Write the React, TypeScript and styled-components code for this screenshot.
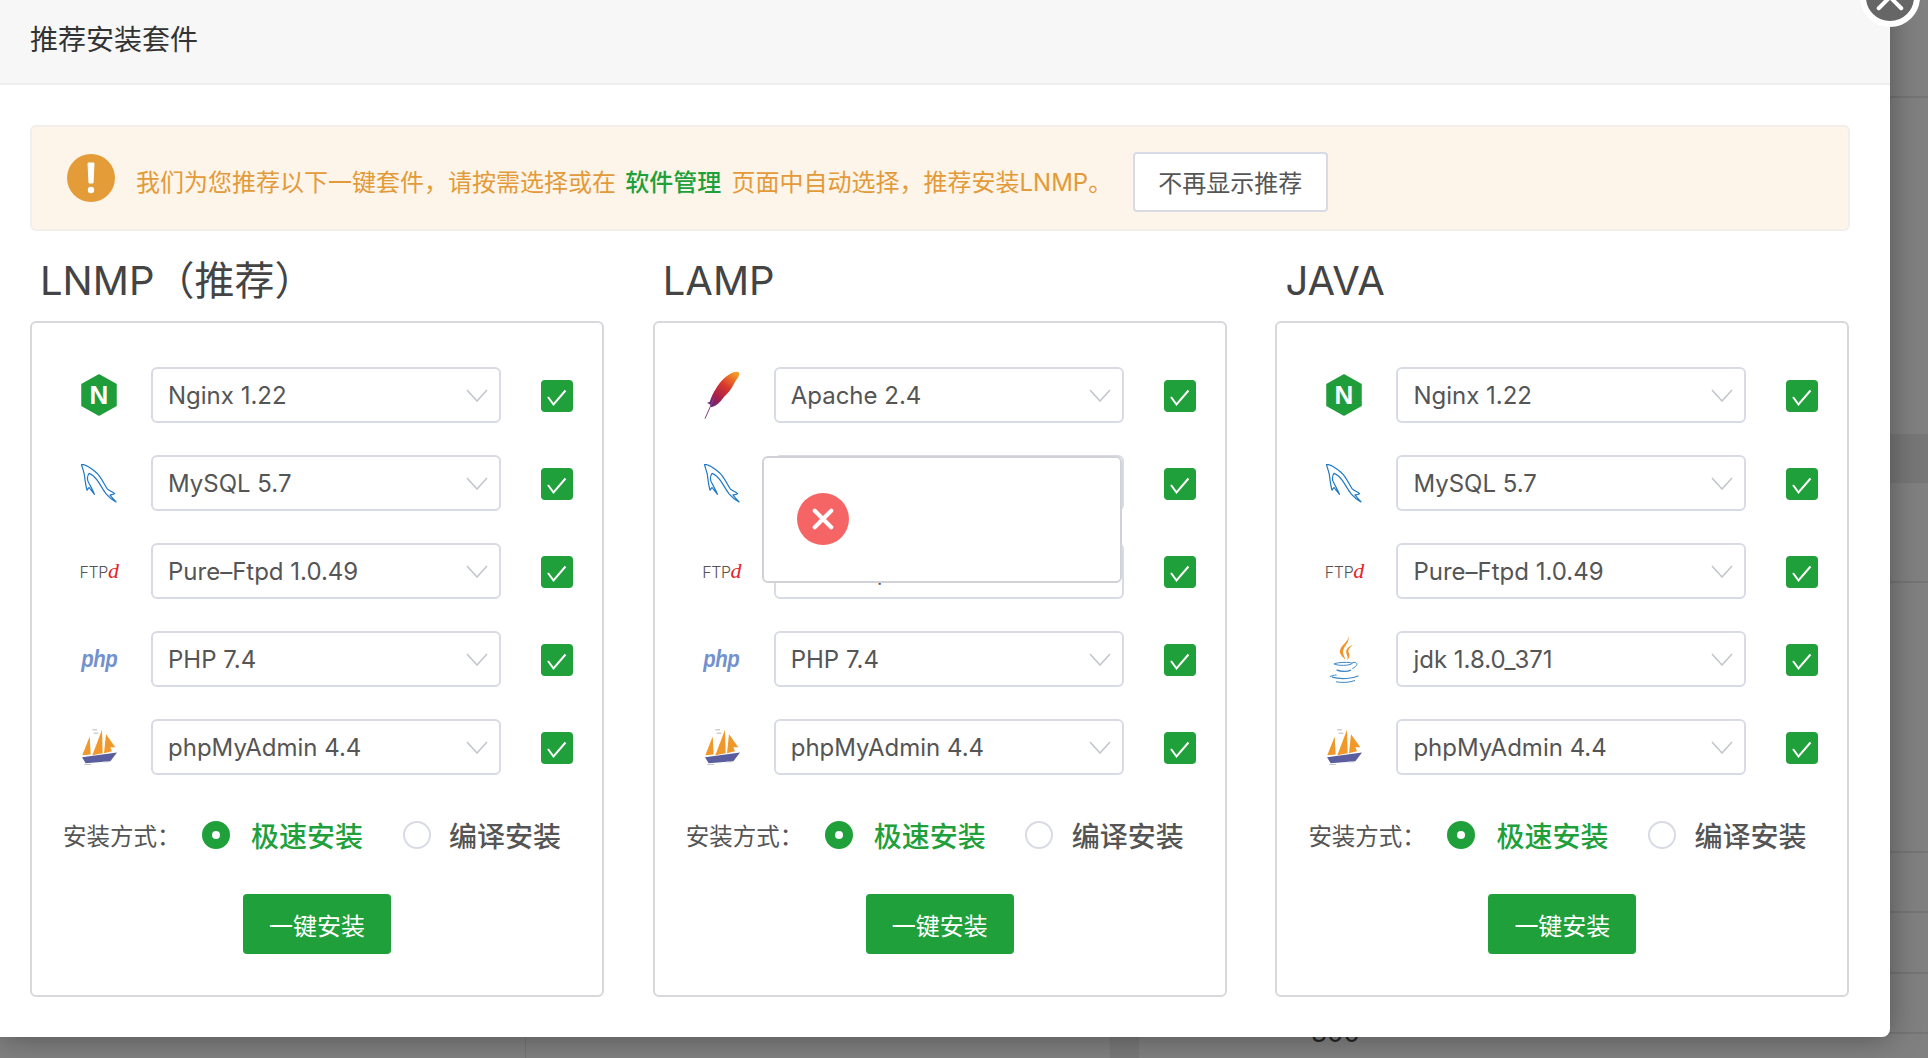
import React from "react";
import styled, { createGlobalStyle } from "styled-components";

const FONT = `Inter, "Noto Sans CJK SC", sans-serif`;
const GREEN = "#20a03a";

const Global = createGlobalStyle`
  html, body { margin: 0; padding: 0; height: 100%; overflow: hidden; }
  body { font-family: ${FONT}; color: #555; }
  * { box-sizing: border-box; }
`;

const Page = styled.div`
  position: relative;
  width: 100%;
  height: 100vh;
  overflow: hidden;
  background: #808080;
`;
const Backdrop = styled.div`
  display: flex;
  flex-direction: column;
`;
const BackRow = styled.div<{ $h: number; $band?: boolean; $plain?: boolean }>`
  height: ${(p) => p.$h}px;
  flex: none;
  background: ${(p) => (p.$band ? "#777" : "transparent")};
  border-bottom: ${(p) => (p.$plain ? "none" : "2px solid #757575")};
`;
const BackFooter = styled.div`
  display: flex;
  height: 24px;
`;
const FootCell = styled.div<{ $w: number; $line?: boolean; $band?: boolean }>`
  width: ${(p) => p.$w}px;
  flex: none;
  background: ${(p) => (p.$band ? "#787878" : "transparent")};
  border-right: ${(p) => (p.$line ? "1px solid #747474" : "none")};
`;
const BackNumber = styled.div`
  margin-top: -16px;
  font-size: 26px;
  line-height: 30px;
  color: #262626;
`;

const Modal = styled.div`
  position: absolute;
  left: 0;
  top: 0;
  width: 1890px;
  height: 1037px;
  background: #fff;
  border-radius: 0 0 8px 0;
  box-shadow: 1px 1px 30px rgba(0, 0, 0, 0.35);
  display: flex;
  flex-direction: column;
`;
const TitleBar = styled.div`
  height: 85px;
  flex: none;
  display: flex;
  align-items: center;
  padding-left: 30px;
  padding-bottom: 7px;
  background: #f7f7f7;
  border-bottom: 2px solid #eee;
  font-size: 28px;
  color: #333;
`;
const CloseBtn = styled.div`
  position: absolute;
  left: 1860px;
  top: -33px;
  width: 60px;
  height: 60px;
  border-radius: 50%;
  background: #666;
  border: 6px solid #fff;
  display: flex;
  align-items: center;
  justify-content: center;
`;
const Body = styled.div`
  padding: 40px 40px 0 30px;
  display: flex;
  flex-direction: column;
`;
const Alert = styled.div`
  height: 106px;
  display: flex;
  align-items: center;
  padding-left: 35px;
  background: #fdf4ea;
  border: 2px solid #f1eeec;
  border-radius: 6px;
`;
const AlertBadge = styled.div`
  width: 48px;
  height: 48px;
  flex: none;
  border-radius: 50%;
  background: #e39c38;
  color: #fff;
  display: flex;
  align-items: center;
  justify-content: center;
  margin-right: 21px;
`;
const AlertText = styled.div`
  font-size: 24px;
  color: #e39a38;
  white-space: pre;
  padding-top: 5px;
`;
const AlertLink = styled.span`
  color: ${GREEN};
  font-weight: 500;
  margin: 0 3.5px 0 2.5px;
`;
const AlertBtn = styled.div`
  width: 195px;
  height: 60px;
  margin: 7px 0 0 20.5px;
  background: #fff;
  border: 2px solid #d8dbe6;
  border-radius: 4px;
  font-size: 24px;
  color: #555;
  display: flex;
  align-items: center;
  justify-content: center;
`;
const Columns = styled.div`
  display: grid;
  grid-template-columns: repeat(3, 574px);
  column-gap: 48.7px;
`;
const Column = styled.div`
  position: relative;
`;
const Heading = styled.div`
  height: 90px;
  padding: 23px 0 0 10px;
  font-size: 40px;
  line-height: 54px;
  color: #444;
  white-space: pre;
`;
const Card = styled.div`
  height: 676px;
  padding: 44px 0 0 49px;
  border: 2px solid #d8d8dc;
  border-radius: 6px;
  display: flex;
  flex-direction: column;
`;
const Rows = styled.div`
  display: flex;
  flex-direction: column;
  gap: 32.1px;
`;
const Row = styled.div`
  display: flex;
  align-items: center;
  height: 56px;
`;
const IconSlot = styled.div`
  width: 36px;
  height: 56px;
  flex: none;
  display: flex;
  align-items: center;
  justify-content: center;
  margin-right: 34px;
`;
const SelectBox = styled.div`
  width: 350px;
  height: 56px;
  flex: none;
  display: flex;
  align-items: center;
  justify-content: space-between;
  padding: 0 11px 0 15px;
  background: #fff;
  border: 2px solid #d8dbe6;
  border-radius: 6px;
  font-size: 24px;
  color: #555;
`;
const Check = styled.div`
  width: 32px;
  height: 32px;
  flex: none;
  margin: 2px 0 0 40px;
  border-radius: 4px;
  background: ${GREEN};
  display: flex;
  align-items: center;
  justify-content: center;
`;
const InstallRow = styled.div`
  display: flex;
  align-items: center;
  height: 30px;
  margin: 45px 0 0 -18px;
`;
const InstallLabel = styled.span`
  width: 139px;
  flex: none;
  font-size: 23.5px;
  color: #555;
  white-space: pre;
`;
const Radio = styled.span<{ $on?: boolean }>`
  width: 28px;
  height: 28px;
  flex: none;
  border-radius: 50%;
  margin-right: ${(p) => (p.$on ? "21px" : "18.5px")};
  background: ${(p) => (p.$on ? GREEN : "#fff")};
  border: 2px solid ${(p) => (p.$on ? GREEN : "#d8dbe6")};
  display: flex;
  align-items: center;
  justify-content: center;
  &::after {
    content: "";
    display: ${(p) => (p.$on ? "block" : "none")};
    width: 8px;
    height: 8px;
    border-radius: 50%;
    background: #fff;
  }
`;
const RadioText = styled.span<{ $on?: boolean }>`
  flex: none;
  font-size: 28px;
  font-weight: 500;
  white-space: nowrap;
  margin-right: 39.5px;
  color: ${(p) => (p.$on ? GREEN : "#555")};
`;
const InstallBtn = styled.div`
  width: 148px;
  height: 60px;
  margin: 44px 0 0 162px;
  border-radius: 4px;
  background: ${GREEN};
  color: #fff;
  font-size: 24px;
  display: flex;
  align-items: center;
  justify-content: center;
`;
const Toast = styled.div`
  position: absolute;
  left: 109.5px;
  top: 225px;
  width: 360px;
  height: 127px;
  background: #fff;
  border: 2px solid #d0d2d8;
  border-radius: 6px;
  display: flex;
  align-items: center;
  padding: 0 0 1px 33px;
`;
const ToastIcon = styled.div`
  width: 52px;
  height: 52px;
  border-radius: 50%;
  background: #f56565;
  display: flex;
  align-items: center;
  justify-content: center;
`;
const FtpMark = styled.span`
  display: inline-flex;
  align-items: baseline;
  font-size: 16px;
  font-weight: 300;
  line-height: 20px;
  letter-spacing: -0.4px;
  color: #555;
  white-space: pre;
`;
const FtpD = styled.span`
  font-family: "Liberation Serif", serif;
  font-style: italic;
  font-size: 22px;
  line-height: 20px;
  color: #e8242c;
`;
const PhpMark = styled.span`
  display: inline-block;
  font-family: "Liberation Sans", sans-serif;
  font-weight: 700;
  font-style: italic;
  font-size: 24px;
  letter-spacing: -0.5px;
  color: #7391cc;
  transform: scaleX(0.85);
`;

const Chevron = () => (
  <svg width="22" height="13" viewBox="0 0 22 13" fill="none">
    <polyline points="1,1 11,12 21,1" stroke="#c0c4cc" strokeWidth="1.5" />
  </svg>
);
const Tick = () => (
  <svg width="32" height="32" viewBox="0 0 32 32" fill="none">
    <polyline points="7,17 12.5,24.5 24.5,10.5" stroke="#fff" strokeWidth="2" />
  </svg>
);
const CrossMark = ({ size, width }: { size: number; width: number }) => (
  <svg width={size} height={size} viewBox="0 0 24 24" fill="none">
    <path d="M3 3L21 21M21 3L3 21" stroke="#fff" strokeWidth={width} strokeLinecap="round" />
  </svg>
);
const Nginx = () => (
  <svg width="36" height="42" viewBox="0 0 36 42">
    <path d="M18 1L35 10.5V31.5L18 41L1 31.5V10.5Z" fill="#1f9d3a" stroke="#1f9d3a" strokeWidth="1.5" strokeLinejoin="round" />
    <text x="18" y="30" textAnchor="middle" fontFamily="Liberation Sans, sans-serif" fontWeight="700" fontSize="26" fill="#fff">N</text>
  </svg>
);
const Dolphin = () => (
  <svg width="36" height="39" viewBox="0 0 107 116" fill="none">
    <path
      d="M1 1C12 1 28 10 46 26C60 38 68 60 78 74C84 80 94 82 100 88C96 92 90 90 86 92C92 100 98 106 104 113C92 106 82 98 74 88C66 78 58 62 48 48C42 40 30 30 24 28C18 36 18 48 24 58C28 66 34 76 40 90C32 80 28 76 24 70C22 72 20 74 18 78C14 66 12 48 10 32C8 22 4 10 1 1Z"
      stroke="#2079c7"
      strokeWidth="3.6"
      strokeLinejoin="round"
    />
  </svg>
);
const Ftpd = () => (
  <FtpMark>
    FTP<FtpD>d</FtpD>
  </FtpMark>
);
const Sailboat = () => (
  <svg width="36" height="37" viewBox="62 58 108 110">
    <path d="M96 60H110M100 70H114" stroke="#b8b8b8" strokeWidth="3" />
    <path d="M66 136L88 80L91 134Z" fill="#f0982a" />
    <path d="M96 136L125 60L127 130Z" fill="#f0982a" />
    <path d="M131 130L137 73L165 112L150 112L155 124Z" fill="#f0982a" />
    <path d="M65 142L170 128L150 154L76 160Z" fill="#5a5e9e" />
    <path d="M72 164H92M128 156H146" stroke="#b8b8c8" strokeWidth="2.5" />
  </svg>
);
const Feather = () => (
  <svg width="36" height="50" viewBox="55 30 108 150" fill="none">
    <defs>
      <linearGradient id="featherFill" x1="0.85" y1="0" x2="0.15" y2="1">
        <stop offset="0" stopColor="#f69d25" />
        <stop offset="0.4" stopColor="#d8382c" />
        <stop offset="0.75" stopColor="#a41e4e" />
        <stop offset="1" stopColor="#5b2a80" />
      </linearGradient>
    </defs>
    <path
      d="M160 38C152 30 130 40 110 60C92 80 78 106 72 126L64 128L74 134L76 142C92 138 104 128 114 112C128 100 138 86 146 70C152 58 164 48 160 38Z"
      fill="url(#featherFill)"
    />
    <path d="M86 112L58 176" stroke="#8a3f8c" strokeWidth="3" />
  </svg>
);
const Java = () => (
  <svg width="33" height="50" viewBox="50 28 100 150" fill="none">
    <path d="M111 32C116 50 86 62 86 80C86 90 96 96 102 106C100 92 94 88 96 78C98 64 118 52 111 32Z" fill="#f0942a" />
    <path d="M126 60C112 66 102 74 106 86C108 94 112 98 108 106C118 98 116 88 112 82C110 74 116 68 126 60Z" fill="#f0942a" />
    <path d="M68 118C82 112 116 112 124 116C116 124 80 124 68 118Z" stroke="#3b86c4" strokeWidth="3" />
    <path d="M124 114C140 110 144 122 124 132" stroke="#3b86c4" strokeWidth="3" />
    <path d="M76 136C88 142 110 142 120 136" stroke="#3b86c4" strokeWidth="3.5" />
    <path d="M56 156C72 150 76 152 76 152M62 158C90 166 126 162 142 154" stroke="#3b86c4" strokeWidth="3.5" />
    <path d="M74 172C92 176 118 174 132 168" stroke="#3b86c4" strokeWidth="3" />
  </svg>
);
const Php = () => <PhpMark>php</PhpMark>;

type Item = { icon: React.ReactNode; label: string };
const ngx: Item = { icon: <Nginx />, label: "Nginx 1.22" };
const mysql: Item = { icon: <Dolphin />, label: "MySQL 5.7" };
const ftp: Item = { icon: <Ftpd />, label: "Pure–Ftpd 1.0.49" };
const php: Item = { icon: <Php />, label: "PHP 7.4" };
const pma: Item = { icon: <Sailboat />, label: "phpMyAdmin 4.4" };

const stacks: { title: string; items: Item[]; toast?: boolean }[] = [
  { title: "LNMP（推荐）", items: [ngx, mysql, ftp, php, pma] },
  { title: "LAMP", toast: true, items: [{ icon: <Feather />, label: "Apache 2.4" }, mysql, ftp, php, pma] },
  { title: "JAVA", items: [ngx, mysql, ftp, { icon: <Java />, label: "jdk 1.8.0_371" }, pma] },
];

const backRows = [
  { h: 98 },
  { h: 336, plain: true },
  { h: 49, band: true, plain: true },
  { h: 100 },
  { h: 270 },
  { h: 60 },
  { h: 61 },
  { h: 60 },
];

export default function App() {
  return (
    <Page>
      <Global />
      <Backdrop>
        {backRows.map((r, i) => (
          <BackRow key={i} $h={r.h} $band={r.band} $plain={r.plain} />
        ))}
        <BackFooter>
          <FootCell $w={526} $line />
          <FootCell $w={584} />
          <FootCell $w={29} $band />
          <FootCell $w={172} />
          <BackNumber>300</BackNumber>
        </BackFooter>
      </Backdrop>
      <Modal>
        <CloseBtn>
          <CrossMark size={30} width={3.2} />
        </CloseBtn>
        <TitleBar>推荐安装套件</TitleBar>
        <Body>
          <Alert>
            <AlertBadge>
              <svg width="8" height="32" viewBox="0 0 8 32">
                <path d="M1 1H7L6 21H2Z" fill="#fff" stroke="#fff" strokeLinejoin="round" />
                <circle cx="4" cy="28" r="3.2" fill="#fff" />
              </svg>
            </AlertBadge>
            <AlertText>
              我们为您推荐以下一键套件，请按需选择或在 <AlertLink>软件管理</AlertLink> 页面中自动选择，推荐安装LNMP。
            </AlertText>
            <AlertBtn>不再显示推荐</AlertBtn>
          </Alert>
          <Columns>
            {stacks.map((s) => (
              <Column key={s.title}>
                <Heading>{s.title}</Heading>
                <Card>
                  <Rows>
                    {s.items.map((it) => (
                      <Row key={it.label}>
                        <IconSlot>{it.icon}</IconSlot>
                        <SelectBox>
                          {it.label}
                          <Chevron />
                        </SelectBox>
                        <Check>
                          <Tick />
                        </Check>
                      </Row>
                    ))}
                  </Rows>
                  <InstallRow>
                    <InstallLabel>安装方式：</InstallLabel>
                    <Radio $on />
                    <RadioText $on>极速安装</RadioText>
                    <Radio />
                    <RadioText>编译安装</RadioText>
                  </InstallRow>
                  <InstallBtn>一键安装</InstallBtn>
                </Card>
                {s.toast && (
                  <Toast>
                    <ToastIcon>
                      <CrossMark size={22} width={4.5} />
                    </ToastIcon>
                  </Toast>
                )}
              </Column>
            ))}
          </Columns>
        </Body>
      </Modal>
    </Page>
  );
}
